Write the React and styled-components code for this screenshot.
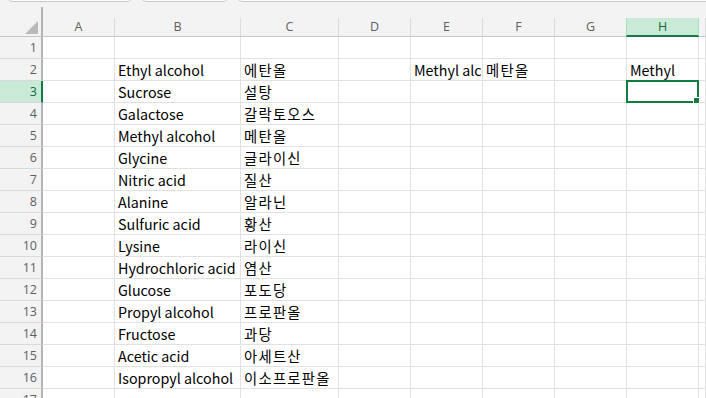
import React from "react";
import styled, { createGlobalStyle, css } from "styled-components";

const GlobalStyle = createGlobalStyle`
  html, body { margin: 0; padding: 0; background: #ffffff; overflow: hidden; }
  body { width: 706px; height: 398px; }
`;

const COLS = "43px 72px 126px 98px 72px 72px 72px 72px 72px 1fr";
const GREEN = "#107c41";
const SEL_BG = "#caead8";
const GRID = "#e1e1e1";

const Sheet = styled.div`
  width: 706px;
  height: 398px;
  overflow: hidden;
  font-family: "Noto Sans CJK KR", "Noto Sans", sans-serif;
`;

const TopArea = styled.div`
  background: #f3f3f3;
  display: flex;
  flex-direction: column;
`;

const TabStrip = styled.div`
  height: 3px;
  display: flex;
  gap: 10px;
  padding-left: 8px;
  overflow: hidden;
`;

const Tab = styled.div`
  flex: 0 0 ${(p) => (p.$w ? `${p.$w}px` : "auto")};
  ${(p) => p.$grow && css`flex: 1 1 auto; margin-right: -10px;`}
  height: 10px;
  margin-top: -8px;
  background: #ffffff;
  border: 1px solid #c9c9c9;
  border-radius: 0 0 4px 4px;
  box-sizing: border-box;
`;

const HeaderRow = styled.div`
  display: grid;
  grid-template-columns: ${COLS};
  align-items: end;
  height: 33px;
  border-bottom: 1px solid #c6c6c6;
  box-sizing: content-box;
`;

const Corner = styled.div`
  height: 29px;
  border-right: 2px solid #b4b4b4;
  box-sizing: border-box;
  position: relative;
`;

const CornerTriangle = styled.div`
  position: absolute;
  right: 3px;
  bottom: 2px;
  width: 0;
  height: 0;
  border-left: 13px solid transparent;
  border-bottom: 13px solid #b9b9b9;
`;

const ColHead = styled.div`
  height: 18px;
  box-sizing: border-box;
  border-right: 1px solid #dcdcdc;
  display: flex;
  align-items: center;
  justify-content: center;
  font-family: "Open Sans", "Noto Sans", sans-serif;
  font-size: 12.5px;
  color: #5f5f5f;
  padding-bottom: 1px;
  ${(p) =>
    p.$sel &&
    css`
      background: ${SEL_BG};
      color: #0e6b38;
      border-left: 1px solid #a6dcbe;
      border-right: 1px solid #a6dcbe;
      margin-left: -1px;
      height: 19px;
      margin-bottom: -1px;
      border-bottom: 2px solid ${GREEN};
    `}
`;

const Body = styled.div`
  display: grid;
  grid-template-columns: ${COLS};
  grid-auto-rows: 22px;
`;

const RowHead = styled.div`
  background: #f3f3f3;
  border-right: 2px solid #b4b4b4;
  border-bottom: 1px solid #dadada;
  box-sizing: border-box;
  display: flex;
  align-items: center;
  justify-content: flex-end;
  padding-right: 4px;
  font-family: "Open Sans", "Noto Sans", sans-serif;
  font-size: 12.5px;
  color: #5f5f5f;
  ${(p) =>
    p.$sel &&
    css`
      background: ${SEL_BG};
      color: #0e6b38;
      border-right: 2px solid ${GREEN};
    `}
`;

const Cell = styled.div`
  position: relative;
  border-right: 1px solid ${GRID};
  border-bottom: 1px solid ${GRID};
  box-sizing: border-box;
  display: flex;
  align-items: flex-end;
  padding: 0 3px 0 3px;
  font-size: 14.3px;
  line-height: 20px;
  color: #000000;
  white-space: nowrap;
  overflow: hidden;
  ${(p) =>
    p.$ko &&
    css`
      letter-spacing: 1.3px;
    `}
`;

const Selection = styled.div`
  position: absolute;
  left: -1px;
  top: -1px;
  right: -1px;
  bottom: -1px;
  border: 2px solid ${GREEN};
  pointer-events: none;
`;

const Handle = styled.div`
  position: absolute;
  right: -3px;
  bottom: -3px;
  width: 5px;
  height: 5px;
  background: ${GREEN};
  border: 1px solid #ffffff;
`;

const SelCellWrap = styled(Cell)`
  overflow: visible;
  z-index: 2;
`;

const letters = ["A", "B", "C", "D", "E", "F", "G", "H", ""];

const data = {
  2: { B: "Ethyl alcohol", C: "에탄올", E: "Methyl alcohol", F: "메탄올", H: "Methyl" },
  3: { B: "Sucrose", C: "설탕" },
  4: { B: "Galactose", C: "갈락토오스" },
  5: { B: "Methyl alcohol", C: "메탄올" },
  6: { B: "Glycine", C: "글라이신" },
  7: { B: "Nitric acid", C: "질산" },
  8: { B: "Alanine", C: "알라닌" },
  9: { B: "Sulfuric acid", C: "황산" },
  10: { B: "Lysine", C: "라이신" },
  11: { B: "Hydrochloric acid", C: "염산" },
  12: { B: "Glucose", C: "포도당" },
  13: { B: "Propyl alcohol", C: "프로판올" },
  14: { B: "Fructose", C: "과당" },
  15: { B: "Acetic acid", C: "아세트산" },
  16: { B: "Isopropyl alcohol", C: "이소프로판올" },
};

const colKeys = ["A", "B", "C", "D", "E", "F", "G", "H", "I"];
const isKorean = (s) => /[\uAC00-\uD7A3]/.test(s || "");

export default function App() {
  const rows = Array.from({ length: 18 }, (_, i) => i + 1);
  return (
    <Sheet>
      <GlobalStyle />
      <TopArea>
        <TabStrip>
          <Tab $w={124} />
          <Tab $w={86} />
          <Tab $grow />
        </TabStrip>
        <HeaderRow>
          <Corner>
            <CornerTriangle />
          </Corner>
          {letters.map((l, i) => (
            <ColHead key={i} $sel={l === "H"}>
              {l}
            </ColHead>
          ))}
        </HeaderRow>
      </TopArea>
      <Body>
        {rows.map((r) => (
          <React.Fragment key={r}>
            <RowHead $sel={r === 3}>{r}</RowHead>
            {colKeys.map((c) => {
              const v = data[r] && data[r][c];
              if (r === 3 && c === "H") {
                return (
                  <SelCellWrap key={c}>
                    <Selection>
                      <Handle />
                    </Selection>
                  </SelCellWrap>
                );
              }
              return (
                <Cell key={c} $ko={isKorean(v)}>
                  {v || ""}
                </Cell>
              );
            })}
          </React.Fragment>
        ))}
      </Body>
    </Sheet>
  );
}
